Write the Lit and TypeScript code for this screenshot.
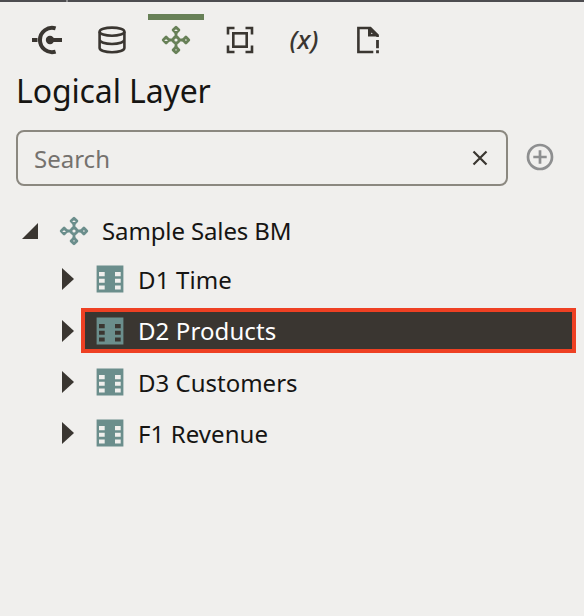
import { LitElement, html, css, svg } from "lit";
import { customElement } from "lit/decorators.js";
import { classMap } from "lit/directives/class-map.js";

const diamonds = html`<svg class="icon" viewBox="0 0 30 30" width="30" height="30" fill="none" stroke="currentColor" stroke-width="2.8">
  <path d="M15 8v3.6M15 18.4v3.6M8 15h3.6M18.4 15h3.6" />
  ${[[15, 5.1], [15, 24.9], [5.1, 15], [24.9, 15]].map(
    ([x, y]) => svg`<path d="M${x} ${y - 2.9}l2.9 2.9l-2.9 2.9l-2.9-2.9z" stroke-linejoin="round" />`
  )}
  <circle cx="15" cy="15" r="3" />
</svg>`;

const connection = html`<svg class="icon" viewBox="0 0 32 30" width="32" height="30" fill="none" stroke="currentColor">
  <path d="M24.6 3.3A12.2 12.2 0 1 0 24.6 26.7" stroke-width="4" />
  <path d="M1 15H6.5M19 15H31" stroke-width="4" />
  <circle cx="19" cy="15" r="4.2" fill="currentColor" stroke="none" />
</svg>`;

const database = html`<svg class="icon" viewBox="0 0 30 30" width="30" height="30" fill="none" stroke="currentColor" stroke-width="2.6">
  <ellipse cx="15" cy="6.7" rx="12.4" ry="4.1" />
  <path d="M2.6 6.7V23C2.6 25.4 8 27.2 15 27.2S27.4 25.4 27.4 23V6.7M2.6 14.6C2.6 17.2 8 19 15 19S27.4 17.2 27.4 14.6" />
</svg>`;

const frame = html`<svg class="icon" viewBox="0 0 30 30" width="30" height="30" fill="none" stroke="currentColor" stroke-width="2.6">
  <path d="M3 9.5V3H9.5M20.5 3H27V9.5M27 20.5V27H20.5M9.5 27H3V20.5" />
  <rect x="8.3" y="8.3" width="13.4" height="13.4" />
</svg>`;

const fileAlert = html`<svg class="icon" viewBox="0 0 30 30" width="30" height="30" fill="none" stroke="currentColor" stroke-width="2.6">
  <path d="M20.3 27H5.4V3H17.3L24.6 10.2V12M16.3 3V10.3H23.5" />
  <path d="M17 3L24.5 10.5H17z" fill="currentColor" stroke="none" />
  <path d="M24.5 15V23.3M24.5 25.3V28.2" stroke-width="2.8" />
  <path d="M18.2 7.4v1.6h1.6z" fill="#f0efed" stroke="none" />
</svg>`;

const table = html`<svg class="icon" viewBox="0 0 28 28" width="28" height="28">
  <path
    fill="currentColor"
    fill-rule="evenodd"
    d="M.6 .4H27.4V27.4H.6z M3 7V11.2H8.7V7z M3 13.7V17.8H8.7V13.7z M3 20.4V24.6H8.7V20.4z M19 7V11.2H24.7V7z M19 13.7V17.8H24.7V13.7z M19 20.4V24.6H24.7V20.4z"
  />
</svg>`;

const tabs = [
  { name: "connections", icon: connection },
  { name: "physical", icon: database },
  { name: "logical", icon: diamonds },
  { name: "presentation", icon: frame },
  { name: "variables", icon: html`<span class="fx">(x)</span>` },
  { name: "invalid", icon: fileAlert },
];

const tables = [
  { label: "D1 Time", fit: "time" },
  { label: "D2 Products", fit: "products" },
  { label: "D3 Customers", fit: "customers" },
  { label: "F1 Revenue", fit: "revenue" },
];

@customElement("app-root")
export class AppRoot extends LitElement {
  static styles = css`
    :host {
      display: block;
      height: 616px;
      box-sizing: border-box;
      background: #f0efed;
      color: #161513;
      font-family: "Noto Sans", "Open Sans", sans-serif;
      font-size: 24px;
      overflow: hidden;
    }
    svg {
      display: block;
      flex: none;
    }
    .edge {
      height: 2px;
      display: flex;
      background: #4d4d50;
    }
    .notch {
      width: 2px;
      margin-left: 66px;
      background: #8d8d8f;
    }
    .tabs {
      display: flex;
      gap: 8px;
      padding: 12px 0 0 20px;
      color: #3a3631;
    }
    .tab {
      width: 56px;
      height: 52px;
      box-sizing: border-box;
      border-top: 6px solid transparent;
      padding-bottom: 6px;
      display: flex;
      align-items: center;
      justify-content: center;
    }
    .tab:first-child {
      padding-right: 2px;
    }
    .tab.active {
      border-color: #678057;
      color: #678057;
    }
    .fx {
      font-size: 26px;
      line-height: 30px;
      padding-bottom: 3px;
      font-style: italic;
      font-weight: 500;
    }
    h1 {
      margin: 0 0 0 16px;
      height: 64px;
      line-height: 50px;
      font-size: 32px;
      font-weight: 400;
      letter-spacing: -0.12px;
      white-space: nowrap;
    }
    .search-row {
      display: flex;
      align-items: center;
      gap: 18px;
      padding-left: 16px;
    }
    .search {
      width: 492px;
      height: 56px;
      box-sizing: border-box;
      border: 2px solid #8b8880;
      border-radius: 8px;
      padding: 0 18px 0 16px;
      display: flex;
      align-items: center;
      justify-content: space-between;
      color: #75726e;
    }
    .clear {
      color: #3a3631;
    }
    .add {
      color: #8e8f90;
      margin-top: -2px;
    }
    .tree {
      padding-top: 22px;
    }
    .row {
      display: flex;
      align-items: center;
      height: 51.3px;
    }
    .row.root {
      height: 45.6px;
      padding-left: 22px;
    }
    .root .icon {
      margin: 0 13px 0 21px;
    }
    .icon {
      flex: none;
    }
    .teal,
    .root .icon {
      color: #6b8e8c;
    }
    .arrow {
      color: #3a3631;
    }
    .child {
      padding-left: 62px;
    }
    .item {
      display: flex;
      align-items: center;
      width: 495px;
      height: 45px;
      box-sizing: border-box;
      border: 4px solid transparent;
      margin-left: 7px;
      padding-left: 11px;
    }
    .item.selected {
      background: #3a3631;
      border-color: #ee4023;
      color: #fff;
    }
    .label {
      white-space: nowrap;
      line-height: 32px;
    }
    .item .label {
      margin-left: 14px;
      padding-top: 1px;
    }
    .item .customers {
      padding-top: 3px;
    }
    .sample {
      letter-spacing: -0.12px;
    }
    .time {
      letter-spacing: 0.15px;
    }
    .products {
      letter-spacing: 0.1px;
    }
    .revenue {
      letter-spacing: 0.08px;
    }
  `;

  render() {
    return html`
      <div class="edge"><div class="notch"></div></div>
      <nav class="tabs">
        ${tabs.map(
          (t) => html`<div class=${classMap({ tab: true, active: t.name === "logical" })}>${t.icon}</div>`
        )}
      </nav>
      <h1><span>Logical Layer</span></h1>
      <div class="search-row">
        <div class="search">
          <span>Search</span>
          <svg class="clear" width="16" height="16" viewBox="0 0 16 16" fill="none" stroke="currentColor" stroke-width="2.2">
            <path d="M1.5 1.5L14.5 14.5M14.5 1.5L1.5 14.5" />
          </svg>
        </div>
        <svg class="add" width="28" height="28" viewBox="0 0 28 28" fill="none" stroke="currentColor" stroke-width="2.7">
          <circle cx="14" cy="14" r="12" />
          <path d="M14 7.3V20.7M7.3 14H20.7" />
        </svg>
      </div>
      <div class="tree">
        <div class="row root">
          <svg class="arrow" width="16" height="16" viewBox="0 0 16 16"><path d="M16 0V16H0z" fill="currentColor" /></svg>
          ${diamonds}
          <span class="label sample">Sample Sales BM</span>
        </div>
        ${tables.map(
          (t) => html`<div class="row child">
            <svg class="arrow" width="12" height="22" viewBox="0 0 12 22"><path d="M0 0L12 11L0 22z" fill="currentColor" /></svg>
            <div class=${classMap({ item: true, selected: t.label === "D2 Products" })}>
              <span class="teal">${table}</span>
              <span class="label ${t.fit}">${t.label}</span>
            </div>
          </div>`
        )}
      </div>
    `;
  }
}
